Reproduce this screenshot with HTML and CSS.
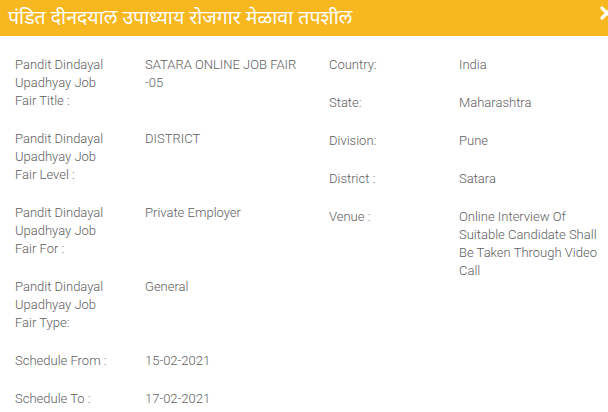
FILE: index.html
```html
<!DOCTYPE html>
<html lang="mr">
<head>
<meta charset="utf-8">
<title>Job Fair Details</title>
<link rel="stylesheet" href="styles.css">
</head>
<body>
<div class="modal">
  <div class="modal-header">
    <h4 class="modal-title">पंडित दीनदयाल उपाध्याय रोजगार मेळावा तपशील</h4>
    <svg class="close" width="14" height="14" viewBox="0 0 14 14" aria-label="close"><path d="M2 2 L12 12 M12 2 L2 12" stroke="#fff" stroke-width="3.2" stroke-linecap="round"/></svg>
  </div>
  <div class="modal-body">
    <div class="col">
      <div class="item"><div class="label">Pandit Dindayal Upadhyay Job Fair Title :</div><div class="value">SATARA ONLINE JOB FAIR -05</div></div>
      <div class="item"><div class="label">Pandit Dindayal Upadhyay Job Fair Level :</div><div class="value">DISTRICT</div></div>
      <div class="item"><div class="label">Pandit Dindayal Upadhyay Job Fair For :</div><div class="value">Private Employer</div></div>
      <div class="item"><div class="label">Pandit Dindayal Upadhyay Job Fair Type:</div><div class="value">General</div></div>
      <div class="item"><div class="label">Schedule From :</div><div class="value">15-02-2021</div></div>
      <div class="item"><div class="label">Schedule To :</div><div class="value">17-02-2021</div></div>
    </div>
    <div class="col">
      <div class="item"><div class="label">Country:</div><div class="value">India</div></div>
      <div class="item"><div class="label">State:</div><div class="value">Maharashtra</div></div>
      <div class="item"><div class="label">Division:</div><div class="value">Pune</div></div>
      <div class="item"><div class="label">District :</div><div class="value">Satara</div></div>
      <div class="item"><div class="label">Venue :</div><div class="value">Online Interview Of Suitable Candidate Shall Be Taken Through Video Call</div></div>
    </div>
  </div>
</div>
</body>
</html>
```
FILE: styles.css
```css
html, body {
  margin: 0;
  padding: 0;
  background: #fff;
  overflow: hidden;
}
.modal {
  width: 628px;
  font-family: Roboto, "Liberation Sans", sans-serif;
}
.modal-header {
  height: 36px;
  background: #f7b71e;
  display: flex;
  align-items: center;
  padding: 0 0 0 8px;
  box-sizing: border-box;
  width: 628px;
}
.modal-title {
  margin: 0;
  flex: 1;
  color: #fff;
  font-size: 19.5px;
  font-weight: normal;
  line-height: 26px;
  font-family: "Noto Sans", sans-serif;
  margin-top: -2px;
}
.close {
  display: block;
  margin-right: 14px;
  margin-top: -10px;
}
.modal-body {
  display: grid;
  grid-template-columns: 314px 314px;
  padding-top: 20px;
}
.col {
  padding-left: 15px;
}
.item {
  display: grid;
  grid-template-columns: 130px 153px;
  margin-bottom: 20px;
  font-size: 13px;
  line-height: 18px;
  font-weight: 300;
  color: #5e5e5e;
}
.label {
  padding-right: 28px;
}
```
